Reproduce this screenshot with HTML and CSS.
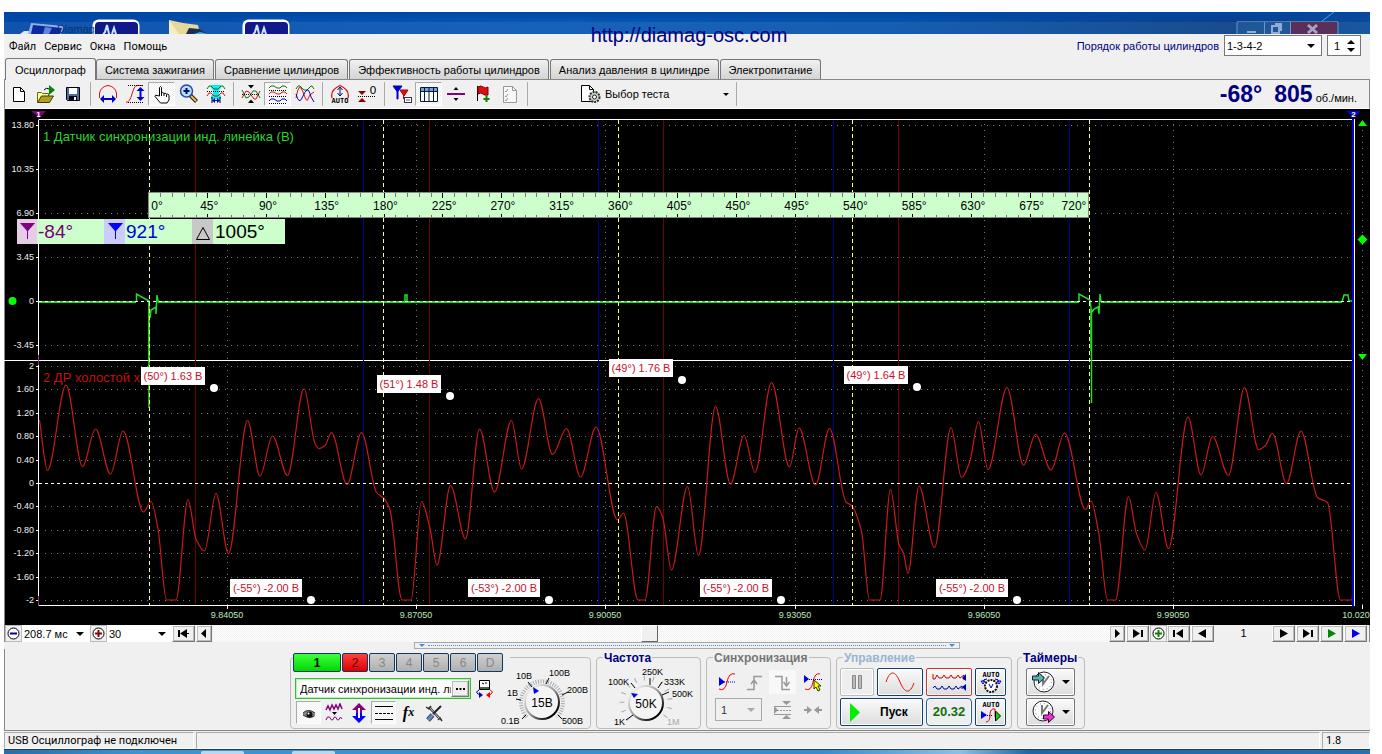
FILE: index.html
```html
<!DOCTYPE html>
<html lang="ru">
<head>
<meta charset="utf-8">
<title>Diamag2</title>
<link rel="stylesheet" href="styles.css">
</head>
<body>
<div class="app">
  <div class="desktop" aria-hidden="true">
    <svg width="300" height="22" viewBox="4 12 300 22">
      <path d="M20 34l4-3h7l2 3z" fill="#dfe8f5"/>
      <path d="M31 23l33 3-3 8H28z" fill="#8fb0e8"/><path d="M33 25l29 3-2 6H31z" fill="#0d2a9c"/><path d="M45 27l7 1-3 6h-6z" fill="#5d86d8"/>
      <rect x="92.500" y="19.500" width="47" height="24" rx="6" fill="#fff"/><rect x="95" y="22" width="43" height="22" rx="4" fill="#10188a"/><path d="M102 36l3-4 2-7 2 9M112 34l2-6 2 6" fill="none" stroke="#cfe0ff" stroke-width="2"/>
      <path d="M169 20l14 3 15 2 2 9h-31z" fill="#e8d898"/><path d="M169 20l10 14h-10z" fill="#f6ecc0"/><path d="M186 34l3-6 10 1 9 5z" fill="#1b2f52"/><path d="M194 34l6-2 8 2z" fill="#41b0e0"/>
      <rect x="242.500" y="19.500" width="47" height="24" rx="6" fill="#fff"/><rect x="245" y="22" width="43" height="22" rx="4" fill="#10188a"/><path d="M252 36l3-4 2-7 2 9M262 34l2-6 2 6" fill="none" stroke="#cfe0ff" stroke-width="2"/>
      <text x="57" y="33" class="ghost-title">Diamag2</text>
    </svg>
    <svg width="140" height="22" viewBox="1230 12 140 22">
      <path d="M1318 24l16-12" stroke="#5f9bd8"/>
      <path d="M1238 22h53v12h-53z" fill="#205796"/><path d="M1291 22h46v12h-46z" fill="#5a2f5a"/>
      <path d="M1237 22v12M1338 22v12M1264.500 22v12M1290.500 22v12" stroke="#6f95c4"/><path d="M1237 21.500h101" stroke="#4f7ab4"/>
      <path d="M1247 31h9v2h-9z" fill="#8fadd2"/><path d="M1272 26h7v7h-7zM1275 24h6v7" fill="none" stroke="#8fadd2" stroke-width="2"/><path d="M1308 25l9 8m0-8l-9 8" stroke="#a8a4c4" stroke-width="3"/>
    </svg>
  </div>

  <header class="menubar">
    <nav class="menu"><a href="#">Файл</a><a href="#">Сервис</a><a href="#">Окна</a><a href="#">Помощь</a></nav>
    <a class="site" href="#">http://diamag-osc.com</a>
    <div class="order">
      <label for="order">Порядок работы цилиндров</label>
      <span class="combo order-combo"><select id="order"><option>1-3-4-2</option></select></span>
      <span class="spin"><input id="cyl" value="1" aria-label="Цилиндр"><svg width="8" height="12" viewBox="0 0 8 12"><path d="M0 4l4-4 4 4zM0 8h8l-4 4z"/></svg></span>
    </div>
  </header>

  <nav class="tabs">
    <button class="tab active">Осциллограф</button><button class="tab">Система зажигания</button><button class="tab">Сравнение цилиндров</button><button class="tab">Эффективность работы цилиндров</button><button class="tab">Анализ давления в цилиндре</button><button class="tab">Электропитание</button>
  </nav>

  <div class="toolbar">
    <div class="tools">
      <button class="tool" aria-label="Новый"><svg viewBox="0 0 20 20"><path d="M4.500 3.500h7l4 4v10h-11z" fill="#fff" stroke="#000"/><path d="M11.500 3.500v4h4" fill="none" stroke="#000"/></svg></button>
      <button class="tool" aria-label="Открыть"><svg viewBox="0 0 20 20"><path d="M1.500 18V8.500h4l1 1h6V12" fill="#ffff9c" stroke="#6b6b00"/><path d="M1.500 18.500l4-6.500h12l-4 6.500z" fill="#b0a020" stroke="#3b3b00"/><path d="M13 1l6 5-6 5z" fill="#080"/><path d="M8 6q2-3 5-1" fill="none" stroke="#000"/></svg></button>
      <button class="tool" aria-label="Сохранить"><svg viewBox="0 0 20 20"><path d="M3.500 3.500h13v13h-12l-1-1z" fill="#536b9c" stroke="#001"/><path d="M6 4h8v6H6z" fill="#fff"/><path d="M6 12h8v4H6z" fill="#001"/><path d="M11 13h2v3h-2z" fill="#fff"/></svg></button>
    </div>
    <div class="tools">
      <button class="tool" aria-label="Ширина"><svg viewBox="0 0 20 20"><path d="M1.500 14V9Q3 2.500 10 1.500 17 2.500 18.500 9v5" fill="none" stroke="#e01010"/><path d="M2 15l4-4v3h8v-3l4 4-4 4v-3H6v3z" fill="#0000c8"/></svg></button>
      <button class="tool" aria-label="Высота"><svg viewBox="0 0 20 20"><path d="M1 18.500Q5 18 7 10T12 1.500h5" fill="none" stroke="#e01010"/><path d="M3 1.500h15M3 18.500h15" stroke="#000" stroke-dasharray="1 1"/><path d="M15.500 3l4 4h-3v6h3l-4 4-4-4h3V7h-3z" fill="#0000c8"/></svg></button>
      <button class="tool pressed" aria-label="Рука"><svg viewBox="0 0 20 20"><path d="M7.500 12V3.500q1-2 2 0V9q1-1.500 2.500.5 1-1 2.500.7 1.500-.7 2.500 1V16l-2 3H8.500L3 12.500q0-2 2-1z" fill="#fff" stroke="#000"/><path d="M9.500 9v3M12 9.500V12M14.500 10.500V13" stroke="#000"/></svg></button>
      <button class="tool" aria-label="Лупа"><svg viewBox="0 0 20 20"><path d="M11 11l6.500 6.500" stroke="#222" stroke-width="4"/><path d="M12 12l5 5" stroke="#f0c040" stroke-width="2"/><circle cx="7.500" cy="7" r="6" fill="#b4e4ff" stroke="#2848a8" stroke-width="1.500"/><path d="M7.500 4v6M4.500 7h6" stroke="#000078" stroke-width="2"/></svg></button>
      <button class="tool" aria-label="Окно фильтра"><svg viewBox="0 0 20 20"><path d="M5 1h10v3l-2 2v4l2 2v3H5v-3l2-2V6L5 4z" fill="#00f0f8"/><path d="M1 5l2-3h2l3 3h4l3-3h2l2 3" fill="none" stroke="#087808"/><path d="M1 7.500h18" stroke="#000" stroke-dasharray="1 1"/><path d="M1 12l2-3h2l3 3h4l3-3h2l2 3" fill="none" stroke="#e01010"/><path d="M6 13v6M14 13v6" stroke="#000"/><path d="M6 16.500l3-2.500v2h2v-2l3 2.500-3 2.500v-2H9v2z" fill="#0000c8"/></svg></button>
    </div>
    <div class="tools">
      <button class="tool" aria-label="Совместить"><svg viewBox="0 0 20 20"><path d="M1 14l4-7 3 1 5 7h2l4-8" fill="none" stroke="#e01010"/><path d="M1 6l4 8 3-1 4-6h3l4 7" fill="none" stroke="#087808"/><path d="M1 10.500h18" stroke="#000" stroke-dasharray="1 1"/><path d="M7 1h6l-3 3.500zM7 19h6l-3-3.500z"/></svg></button>
      <button class="tool pressed" aria-label="Разделить"><svg viewBox="0 0 20 20"><path d="M1 4l2-2h3l3 2h3l2-2h3l2 2" fill="none" stroke="#087808"/><path d="M1 6.500h18M1 12.500h18M1 19.500h18" stroke="#000" stroke-dasharray="1 1"/><path d="M1 10l2-2h3l3 2h3l2-2h3l2 2" fill="none" stroke="#e01010"/><path d="M1 17l2-2h3l3 2h3l2-2h3l2 2" fill="none" stroke="#0000c8"/></svg></button>
      <button class="tool" aria-label="Наложить"><svg viewBox="0 0 20 20"><path d="M1 5l2-3h2l4 4h3l4-4h1l2 3" fill="none" stroke="#087808"/><path d="M1 14Q4-4 8 8t5 7 6-7" fill="none" stroke="#e01010"/><path d="M1 10q3 11 6 4t5-8 4 7l3 5" fill="none" stroke="#0000c8"/></svg></button>
    </div>
    <div class="tools">
      <button class="tool" aria-label="Авто"><svg viewBox="0 0 20 20"><path d="M2 14Q0 6 10 1.500 20 6 18 14" fill="none" stroke="#e01010" stroke-width="1.300"/><path d="M10 3v9M7.500 6L10 3l2.500 3M7.500 9l2.500 3 2.500-3" fill="none" stroke="#001080"/><text x="10" y="19" class="i-auto">AUTO</text></svg></button>
      <button class="tool" aria-label="Ноль"><svg viewBox="0 0 20 20"><path d="M1 7h8l-4 4zM1 18h8l-4-4z" fill="#800"/><path d="M1 12.500h18" stroke="#000" stroke-dasharray="1 1"/><text x="16" y="10" class="i-zero">0</text></svg></button>
    </div>
    <div class="tools">
      <button class="tool" aria-label="Маркеры"><svg viewBox="0 0 20 20"><path d="M1 2h9L5.500 8zM5 7h1v8H5z" fill="#0000c8" stroke="#0000c8"/><path d="M8 6h8l-4 6zM11.500 11v4" fill="#e01010" stroke="#a00"/><rect x="12.500" y="13.500" width="7" height="5" fill="#fff" stroke="#334"/><path d="M14 16h4" stroke="#557"/></svg></button>
      <button class="tool pressed" aria-label="Таблица"><svg viewBox="0 0 20 20"><path d="M1.500 3.500h17v14h-17z" fill="#fff" stroke="#001a40"/><path d="M2 4h16v3H2z" fill="#78a0d8"/><path d="M1 7.500h18M5.500 3v15M10 3v15M14.500 3v15" stroke="#001a40"/></svg></button>
      <button class="tool" aria-label="Разделитель"><svg viewBox="0 0 20 20"><path d="M1 9h18v2H1z" fill="#800080"/><path d="M7.500 6L10 3l2.500 3zM7.500 14l2.500 3 2.500-3z"/></svg></button>
      <button class="tool" aria-label="Флажок"><svg viewBox="0 0 20 20"><path d="M4.500 2v15" stroke="#000"/><path d="M5 3q3-2 5 0t5 0v8q-3 1-5-1t-5 0z" fill="#e01010" stroke="#700"/><path d="M13.500 12v6M10.500 15h6" stroke="#080" stroke-width="2"/></svg></button>
      <button class="tool" aria-label="Список"><svg viewBox="0 0 20 20"><path d="M3.500 2.500h9l4 4v12h-13z" fill="#f8f8f8" stroke="#999"/><path d="M12.500 2.500v4h4M5 7l1 1 2-3M5 12l1 1 2-3M5 16l1 1 2-3" fill="none" stroke="#999"/></svg></button>
    </div>
    <button class="test"><svg width="22" height="20" viewBox="0 0 22 20"><path d="M1.500 1.500h8l4 4v12h-12z" fill="#fff" stroke="#000"/><path d="M9.500 1.500v4h4" fill="none" stroke="#000"/><circle cx="14.500" cy="13" r="5" fill="#c8d8c8" stroke="#333" stroke-width="2" stroke-dasharray="2 1"/><circle cx="14.500" cy="13" r="2" fill="#fff" stroke="#222"/></svg><span>Выбор теста</span><i class="caret"></i></button>
    <div class="rpm"><b>-68°</b><b>805</b><span>об./мин.</span></div>
  </div>

  <svg class="plot" id="plot" viewBox="4 109 1366 516">
    <rect x="4" y="109" width="1366" height="516"/>
    <path d="M4.500 109v516" stroke="#888"/>
    <g id="grid"></g>
    <path d="M38.500 119v487M38 119.500h1316M4 360.500h1350M38 605.500h1316" stroke="#fff"/>
    <path d="M195.500 120v485M429.500 120v485M663.500 120v485M898.500 120v485" class="mark-red"/>
    <path d="M363.500 120v485M598.500 120v485M833.500 120v485M1069.500 120v485" class="mark-blue"/>
    <text x="43" y="141" class="trace-name green">1 Датчик синхронизации инд. линейка (В)</text>
    <text x="43" y="382" class="trace-name red">2 ДР холостой ход</text>
    <path class="trace-green" d="M136.500 302v-8l12.500 7v59M150 318l1-8 5-3v7l1-19 1 6 3 1M405 302v-7h2v7M1079 302v-8l11 6 1 8v43M1092 312l2-3 4-2 1 7 1-20 1 8M1342 302l2-7h4l1 6h5"/>
    <path class="trace-green flat" d="M39 302h97M158 302h921M1101 302h241"/>
    <path class="trace-green" d="M149 301v107M1091.500 309v94"/>
    <path d="M39 301.500h1314M39 483.500h1314" stroke="#fff" stroke-dasharray="3 3"/>
    <path id="trace-red" class="trace-red"/>
    <path d="M149.500 120v485M383.500 120v485M618.500 120v485M852.500 120v485M1089.500 120v485" class="cursor"/>
    <path d="M38.500 117v3M38.500 355v10M38.500 596v10" stroke="#806" opacity=".8"/>
    <path d="M1353 119v487" stroke="#0000e0" stroke-width="2"/><path d="M1354.500 119v487" stroke="#fff"/>
    <path d="M31 111h15l-7 7z" fill="#800080"/><path d="M1346 111h15l-7 7z" fill="#0000d8"/>
    <text x="38.500" y="117" class="flag">1</text><text x="1353.500" y="117" class="flag">2</text>
    <path d="M1358 126h9l-4.500-6zM1358 354h9l-4.500 6zM1357.500 239.500l5-5 5 5-5 5z" fill="#0f0"/>
    <circle cx="12.500" cy="301" r="4" fill="#0f0"/>
    <g id="ruler"></g>
    <g>
      <rect x="17" y="219" width="268" height="25" fill="#cfc"/>
      <rect x="17" y="219" width="20" height="25" fill="#e6cce6"/><rect x="104" y="219" width="21" height="25" fill="#ccf"/><rect x="192" y="219" width="21" height="25" fill="#c8c8c8"/>
      <path d="M20 223h15l-7 8v8h-1v-8z" fill="#800080"/><path d="M108 223h15l-7 8v8h-1v-8z" fill="#00f"/><path d="M196.500 239.500h13l-6.500-12z" fill="none" stroke="#000"/>
      <text x="38" y="238" class="measure" fill="#707">-84°</text><text x="126" y="238" class="measure" fill="#00d">921°</text><text x="215" y="238" class="measure">1005°</text>
    </g>
    <g id="callouts"></g>
  </svg>

  <div class="navrow">
    <button class="mini" aria-label="Уменьшить"><svg width="15" height="15" viewBox="0 0 15 15"><circle cx="7.500" cy="7.500" r="5.500" fill="#fff" stroke="#000"/><path d="M4 7.500h7" stroke="#008" stroke-width="2"/></svg></button>
    <span class="combo span-combo"><select aria-label="Развёртка"><option>208.7 мс</option></select></span>
    <button class="mini" aria-label="Увеличить"><svg width="15" height="15" viewBox="0 0 15 15"><circle cx="7.500" cy="7.500" r="5.500" fill="#fff" stroke="#000"/><path d="M4 7.500h7M7.500 4v7" stroke="#800" stroke-width="2"/></svg></button>
    <span class="combo count-combo"><select aria-label="Масштаб"><option>30</option></select></span>
    <button class="nb w23" aria-label="В начало"><svg width="13" height="9" viewBox="0 0 13 9"><path d="M1 1h2v7H1zM10 0v9L3 4.500z"/><path d="M10 4h2v1h-2z"/></svg></button>
    <button class="nb w17" aria-label="Назад"><svg width="6" height="9" viewBox="0 0 6 9"><path d="M5 0v9L0 4.500z"/></svg></button>
    <div class="track"><button class="thumb" aria-label="Позиция"></button></div>
    <button class="nb w17" aria-label="Вперёд"><svg width="6" height="9" viewBox="0 0 6 9"><path d="M1 0v9l5-4.500z"/></svg></button>
    <button class="nb w23" aria-label="В конец"><svg width="13" height="9" viewBox="0 0 13 9"><path d="M10 1h2v7h-2zM2 0v9l7-4.500z"/></svg></button>
    <button class="mini" aria-label="Добавить"><svg width="15" height="15" viewBox="0 0 15 15"><circle cx="7.500" cy="7.500" r="5.500" fill="#fff" stroke="#000"/><path d="M4 7.500h7M7.500 4v7" stroke="#080" stroke-width="2"/></svg></button>
    <button class="nb w23" aria-label="Первый кадр"><svg width="13" height="9" viewBox="0 0 13 9"><path d="M1 1h2v7H1zM11 0v9L4 4.500z"/></svg></button>
    <button class="nb w23" aria-label="Предыдущий кадр"><svg width="9" height="9" viewBox="0 0 9 9"><path d="M8 0v9L0 4.500z"/></svg></button>
    <output class="frame">1</output>
    <button class="nb w23" aria-label="Следующий кадр"><svg width="9" height="9" viewBox="0 0 9 9"><path d="M1 0v9l8-4.500z"/></svg></button>
    <button class="nb w23" aria-label="Последний кадр"><svg width="13" height="9" viewBox="0 0 13 9"><path d="M10 1h2v7h-2zM2 0v9l7-4.500z"/></svg></button>
    <button class="nb w23" aria-label="Воспроизвести"><svg width="9" height="9" viewBox="0 0 9 9"><path d="M1 0v9l8-4.500z" fill="#080"/></svg></button>
    <button class="nb w23" aria-label="Воспроизвести всё"><svg width="9" height="9" viewBox="0 0 9 9"><path d="M1 0v9l8-4.500z" fill="#00e"/></svg></button>
  </div>

  <div class="splitter"><i class="caret blue"></i><i class="dots"></i><i class="caret blue"></i></div>

  <main class="panel">
    <section class="group channel">
      <div class="channel-main">
        <div class="chans"><button class="ch on1">1</button><button class="ch on2">2</button><button class="ch">3</button><button class="ch">4</button><button class="ch">5</button><button class="ch">6</button><button class="ch">D</button></div>
        <div class="sensor-row">
          <div class="sensor"><input aria-label="Датчик" value="Датчик синхронизации инд. линейка"><button class="nb dots3" aria-label="Выбрать датчик"><svg width="9" height="2" viewBox="0 0 9 2"><path d="M0 0h2v2H0zM3.500 0h2v2h-2zM7 0h2v2H7z"/></svg></button></div>
          <button class="tool" aria-label="Инверсия"><svg viewBox="0 0 20 20"><path d="M4.500 1.500h10v9h-10z" fill="#fff" stroke="#000"/><path d="M5 8h9v2H5z" fill="#486048"/><path d="M7 4l2 1M11 3v2" stroke="#000"/><path d="M4 11q-4 2-1 4l3 1" fill="none" stroke="#00a"/><path d="M4 13l4 3-4 3z" fill="#00a"/><path d="M15 11q4 2 1 4l-2 1" fill="none" stroke="#e00"/><path d="M15 13l-4 3 4 3z" fill="#e00"/></svg></button>
        </div>
        <div class="chan-tools">
          <button class="tool pressed" aria-label="Показать"><svg viewBox="0 0 20 20"><path d="M4 10q5-6 12 0v3q-6 5-12-1z" fill="#8a8a84"/><path d="M4 10q5-5 12 0M4 12q6 4 11 1" fill="none" stroke="#333"/><circle cx="10.500" cy="11.500" r="3" fill="#111"/><circle cx="9.500" cy="10.500" r="1" fill="#fff"/></svg></button>
          <button class="tool" aria-label="Сглаживание"><svg viewBox="0 0 20 20"><path d="M2 7l2-4 2 4 2-5 2 4 2-4 2 4 2-5 2 5" fill="none" stroke="#800080" stroke-width="1.500"/><path d="M8 9h5l-2.500 3z"/><path d="M2 17l1.500-3h2l2 3h1l2-3h1l2 3h1l2-3 1.500 2" fill="none" stroke="#800080"/></svg></button>
          <button class="tool" aria-label="Сдвиг"><svg viewBox="0 0 20 20"><path d="M10 0l7 7h-4v3H7V7H3z" fill="#800080"/><path d="M10 20l7-7h-4v-3H7v3H3z" fill="#00f"/><path d="M9 5h2v10H9zM5 9.500h2v1H5zM13 9.500h2v1h-2z" fill="#fff"/></svg></button>
          <button class="tool pressed" aria-label="Линии"><svg viewBox="0 0 20 20"><path d="M1 3.500h18M1 16.500h18" stroke="#000"/><path d="M1 10.500h18" stroke="#000" stroke-dasharray="3 1"/></svg></button>
          <button class="tool fx" aria-label="Функция"><i>f</i>x</button>
          <button class="tool" aria-label="Настройки"><svg viewBox="0 0 20 20"><path d="M5 4l10 11" stroke="#333" stroke-width="2.500"/><path d="M6 5l9 10" stroke="#ccc"/><path d="M2 4l3 2 2-3" fill="none" stroke="#333" stroke-width="1.500"/><path d="M14 17l2-2 2 3" fill="none" stroke="#333" stroke-width="1.500"/><path d="M17 3l-8 8" stroke="#222" stroke-width="2"/><path d="M8.500 12L4 17" stroke="#304870" stroke-width="5"/><path d="M8.500 12L4 17" stroke="#6888b8" stroke-width="3"/></svg></button>
        </div>
      </div>
      <svg class="knob" width="92" height="66" viewBox="498 662 92 66">
        <defs><linearGradient id="kg" x1="0" y1="0" x2="1" y2="1"><stop offset=".15" stop-color="#e8e8e8"/><stop offset=".5" stop-color="#999"/><stop offset=".85" stop-color="#000"/></linearGradient></defs>
        <path d="M527 717A21 21 0 1 1 557 717" fill="none" stroke="#aaa" stroke-width="4" stroke-dasharray="1 1.500"/>
        <circle cx="542" cy="702" r="17" fill="#f4f4f4" stroke="url(#kg)" stroke-width="2"/>
        <path d="M522 719l4-4M516 699l5 1M528 682l4 5M549 678l-3 6M568 692l-6 3M562 719l-4-4" stroke="#000"/>
        <path d="M533 687l6 4-5 3z" fill="#00f"/>
        <text x="542" y="707" class="knob-value">15В</text>
        <g class="knob-label"><text x="501" y="724">0.1В</text><text x="507" y="696">1В</text><text x="516" y="679">10В</text><text x="549" y="676">100В</text><text x="567" y="693">200В</text><text x="562" y="724">500В</text></g>
      </svg>
    </section>

    <section class="group freq"><h2>Частота</h2>
      <svg class="knob" width="103" height="64" viewBox="596 664 103 64">
        <path d="M628 718A24 24 0 1 1 662 718" fill="none" stroke="#aaa" stroke-width="5" stroke-dasharray="1 8"/>
        <circle cx="645" cy="702" r="17" fill="#f4f4f4" stroke="url(#kg)" stroke-width="2"/>
        <path d="M625 719l7-5M630 682l4 5M649 677v7M661 681l-4 6M668 691l-7 3" stroke="#000"/>
        <path d="M630 692l7 1-4 4z" fill="#00f"/>
        <text x="645" y="707" class="knob-value">50K</text>
        <g class="knob-label"><text x="613" y="724">1K</text><text x="607" y="684">100K</text><text x="641" y="674">250K</text><text x="663" y="684">333K</text><text x="671" y="696">500K</text><text x="666" y="724" fill="#aaa">1M</text></g>
      </svg>
    </section>

    <section class="group sync"><h2>Синхронизация</h2>
      <div class="sync-grid">
        <button class="tool" aria-label="Синхронизация по фронту"><svg viewBox="0 0 20 20"><path d="M2 17q6 3 8-7t8-8" fill="none" stroke="#e00"/><path d="M2 5l6 5-6 4z" fill="#00e"/><path d="M3 10h15" stroke="#00a" stroke-dasharray="1 1"/></svg></button>
        <button class="tool" aria-label="Фронт"><svg viewBox="0 0 20 20"><path d="M2 17.500h7v-13h8M9 8l-3 4M9 8l3 4" fill="none" stroke="#999" stroke-width="1.500"/></svg></button>
        <button class="tool soft" aria-label="Спад"><svg viewBox="0 0 20 20"><path d="M2 4.500h7v13h8M13.500 5v8m-3-3l3 4 3-4" fill="none" stroke="#999" stroke-width="1.500"/></svg></button>
        <button class="tool" aria-label="Выбор уровня"><svg viewBox="0 0 20 20"><path d="M2 17q6 3 8-7t7-8" fill="none" stroke="#e00"/><path d="M1 3l5 4-5 4z" fill="#00e"/><path d="M2 7.500h17" stroke="#00a" stroke-dasharray="1 1"/><path d="M11 8l7 6h-3l2 4-2 1-2-4-2 2z" fill="#ff0" stroke="#330"/></svg></button>
        <span class="combo sync-combo"><select aria-label="Канал синхронизации" disabled><option>1</option></select></span>
        <button class="tool" aria-label="Расширить"><svg viewBox="0 0 20 20"><path d="M9 1h9l-4.500 4zM9 19h9l-4.500-4zM1 6l4 4-4 4z" fill="#999"/><path d="M1 6.500h17M1 14.500h17" stroke="#999"/><path d="M1 10.500h17" stroke="#999" stroke-dasharray="2 1"/></svg></button>
        <button class="tool" aria-label="Сжать"><svg viewBox="0 0 20 20"><path d="M1 9h3V6l5 4-5 4v-3H1zM19 9h-3V6l-5 4 5 4v-3h3z" fill="#999"/></svg></button>
      </div>
    </section>

    <section class="group ctrl"><h2>Управление</h2>
      <div class="ctrl-grid">
        <button class="btn off" aria-label="Пауза"><svg width="12" height="16" viewBox="0 0 12 16"><path d="M1.500 1.500h3v13h-3zM7.500 1.500h3v13h-3z" fill="#bbb" stroke="#888"/></svg></button>
        <button class="btn" aria-label="Непрерывно"><svg width="30" height="20" viewBox="0 0 30 20"><path d="M1 10C5-2 10-2 15 10s10 12 14 1" fill="none" stroke="#e01010"/></svg></button>
        <button class="btn red" aria-label="Самописец"><svg width="36" height="20" viewBox="0 0 36 20"><path d="M2 2v5h2l2-4 2 3h3l2-3 2 3h3l2-3 2 3h3l2-3 2 3 4-3v5" fill="none" stroke="#c00"/><path d="M2 16l2-2 2 3h3l2-3 2 3h3l2-3 2 3h3l2-3 2 3 4-3v3" fill="none" stroke="#00a"/><path d="M35 2v7l-4-3zM35 12v7l-4-4z" fill="#00a"/></svg></button>
        <button class="btn" aria-label="Авто масштаб"><svg width="22" height="24" viewBox="0 0 22 24"><text x="11" y="7" class="i-auto">AUTO</text><path d="M3 12q0-3 4-3M19 12q0-3-4-3M1 11l2 3 2-3zM17 11l2 3 2-3z" fill="none" stroke="#00c"/><circle cx="11" cy="16" r="6" fill="#fff" stroke="#111" stroke-width="2" stroke-dasharray="2 1"/><path d="M9 14l2 4 2-4" fill="none" stroke="#00a"/></svg></button>
        <button class="btn start"><svg width="10" height="19" viewBox="0 0 10 19"><path d="M0 0l10 9.500L0 19z" fill="#0e0"/></svg><span>Пуск</span></button>
        <button class="btn time">20.32</button>
        <button class="btn" aria-label="Авто синхронизация"><svg width="22" height="24" viewBox="0 0 22 24"><text x="11" y="7" class="i-auto">AUTO</text><path d="M1 11l6 4-6 4z" fill="#00e"/><path d="M6 22q4 0 4-7t5-6v8" fill="none" stroke="#e00"/><path d="M1 15.500h12" stroke="#00a" stroke-dasharray="1 1"/><path d="M15.500 11l5 5-5 5z" fill="#0d0" stroke="#000"/></svg></button>
      </div>
    </section>

    <section class="group timers"><h2>Таймеры</h2>
      <div class="timer-col">
        <button class="btn gray" aria-label="Таймер пуска"><svg width="25" height="24" viewBox="0 0 25 24"><circle cx="13" cy="12" r="10" fill="#fff" stroke="#222"/><circle cx="13" cy="12" r="7.500" fill="none" stroke="#777" stroke-dasharray="1 3"/><path d="M12 6v8l6-8" fill="none" stroke="#777" stroke-width="2"/><path d="M1.500 6h6V2.500l6 5.500-6 5.500V10h-6z" fill="#5cb4a8" stroke="#123"/></svg><i class="caret"></i></button>
        <button class="btn gray" aria-label="Таймер остановки"><svg width="25" height="24" viewBox="0 0 25 24"><circle cx="12" cy="11" r="10" fill="#fff" stroke="#222"/><circle cx="12" cy="11" r="7.500" fill="none" stroke="#777" stroke-dasharray="1 3"/><path d="M11 5v8l6-8" fill="none" stroke="#777" stroke-width="2"/><path d="M12.500 15h5v-3.500l6 5.500-6 5.500V19h-5z" fill="#f030d0" stroke="#303"/></svg><i class="caret"></i></button>
      </div>
    </section>
  </main>

  <footer class="status"><span class="cell msg">USB Осциллограф не подключен</span><span class="cell grow"></span><span class="cell ver">1.8</span></footer>
  <div class="taskbar" aria-hidden="true"><i></i><i></i></div>
</div>
<script src="chart.js"></script>
</body>
</html>
```
FILE: styles.css
```css
* { box-sizing: border-box; }
body { margin: 0; background: #fff; font: 11px/14px "Liberation Sans", sans-serif; color: #000; }
button, input, select { font: inherit; color: inherit; margin: 0; padding: 0; border: 0; background: none; border-radius: 0; }
a { color: inherit; text-decoration: none; }
svg { display: block; flex: none; }
.app { margin: 12px 12px 0 4px; background: #f0f0f0; }

.desktop { display: flex; justify-content: space-between; height: 22px; background: linear-gradient(#0046a4, transparent 45%, #ffffff10 46%), linear-gradient(90deg, #0048a8, #0858b4 40%, #0653ac 65%, #0a4088 90%, #0a4c98); }
.ghost-title { font: 11px "Liberation Sans", sans-serif; fill: #0a2a60; opacity: .8; }

.menubar { position: relative; display: flex; justify-content: space-between; height: 24px; }
.menu { display: flex; align-items: center; gap: 8px; padding: 2px 0 0 5px; font: 11px/14px Roboto, sans-serif; }
.site { position: absolute; left: 50%; top: -11px; transform: translateX(-50%); margin-left: 2px; font-size: 20px; line-height: 24px; color: #000080; }
.order { display: flex; align-items: flex-start; gap: 5px; padding: 1px 9px 0 0; }
.order label { color: #000080; line-height: 22px; }
.combo { position: relative; display: block; background: #fff; }
.combo select { display: block; width: 100%; height: 100%; appearance: none; padding-left: 2px; opacity: 1; }
.combo::after { content: ""; position: absolute; right: 6px; top: 50%; margin-top: -2px; border: 4px solid transparent; border-top-color: #000; border-bottom: 0; pointer-events: none; }
.order-combo { width: 98px; height: 21px; border: 1px solid #777; }
.spin { display: flex; align-items: center; width: 34px; height: 21px; border: 1px solid #777; background: #fff; }
.spin input { width: 19px; padding-left: 6px; }

.tabs { display: flex; align-items: flex-end; gap: 1px; height: 22px; padding-left: 1px; border-bottom: 1px solid #888; }
.tab { height: 20px; padding: 0 8px; border: 1px solid #777; border-bottom: 0; border-radius: 3px 3px 0 0; background: linear-gradient(#f0f0f0, #d4d4d4); white-space: nowrap; }
.tab.active { height: 22px; padding: 0 9px; margin: 0 -1px -1px 0; background: #f0f0f0; position: relative; }

.toolbar { display: flex; align-items: center; height: 29px; border-bottom: 1px solid #fff; border-left: 1px solid #888; border-right: 1px solid #888; }
.tools { display: flex; padding: 0 4px 0 3px; border-right: 1px solid #aaa; }
.tools:first-child { padding-left: 0; }
.tool { display: grid; place-items: center; width: 27px; height: 24px; }
.tool svg { width: 20px; height: 20px; }
.pressed { background: repeating-conic-gradient(#fff 0 25%, #f0f0f0 0 50%) 0 0 / 2px 2px; border: 1px solid #fff; border-left-color: #aaa; border-top-color: #aaa; }
.soft { background: #f8f8f8; }
.i-auto { font: bold 7px "DejaVu Sans Mono", monospace; text-anchor: middle; }
.i-zero { font: 11px "DejaVu Sans", sans-serif; text-anchor: middle; }
.test { display: flex; align-items: center; width: 157px; height: 24px; margin-left: 52px; padding-right: 7px; border-right: 1px solid #aaa; gap: 3px; }
.caret { border: 4px solid transparent; border-top-color: #000; border-bottom: 0; }
.test .caret { margin-left: auto; border-width: 3px; border-bottom: 0; }
.rpm { display: flex; align-items: baseline; margin-left: auto; padding-right: 12px; }
.rpm b { margin-right: 3px; font-size: 23px; line-height: 24px; color: #000080; }
.rpm b:first-child { margin-right: 12px; }

.plot { width: 100%; height: auto; font-family: "Liberation Sans", sans-serif; }
.grid-line { stroke: #777; stroke-dasharray: 1 5; }
.tick { stroke: #fff; }
.axis { font-size: 9px; fill: #eee; text-anchor: end; }
.time-label { font-size: 9px; fill: #bfe8bf; text-anchor: middle; }
.mark-red { stroke: #700000; }
.mark-blue { stroke: #000088; }
.cursor { stroke: #ffff70; stroke-dasharray: 4 3; }
.trace-name { font-size: 13px; }
.green { fill: #2bd52b; }
.red { fill: #c01010; }
.trace-green { fill: none; stroke: #20e020; stroke-width: 1.5; }
.flat { stroke-width: 2; }
.trace-red { fill: none; stroke: #c81a1a; stroke-width: 1.2; }
.flag { font-size: 8px; font-weight: bold; fill: #fff; text-anchor: middle; }
.measure { font-size: 19px; }
.ruler-label { font-size: 12px; text-anchor: middle; }
.callout { font-size: 11px; fill: #c8102a; text-anchor: middle; }

.navrow { display: flex; height: 17px; align-items: stretch; border-left: 1px solid #888; border-right: 1px solid #888; padding-right: 1px; }
.mini { width: 17px; display: grid; place-items: center; border: 1px solid #bbb; }
.nb { display: grid; place-items: center; margin-right: 1px; background: #f0f0f0; border: 1px solid; border-color: #fff #777 #777 #fff; box-shadow: 0 0 0 1px #bbb inset; }
.w17 { width: 16px; }
.w23 { width: 23px; }
.span-combo { width: 68px; }
.count-combo { width: 65px; }
.track { flex: 1; background: repeating-conic-gradient(#fff 0 25%, #f0f0f0 0 50%) 0 0 / 2px 2px; display: flex; padding-left: 31.4%; }
.thumb { width: 17px; background: #f0f0f0; border: 1px solid; border-color: #fff #666 #666 #fff; }
.frame { width: 57px; text-align: center; line-height: 17px; }

.splitter { display: flex; align-items: center; gap: 3px; width: 40%; height: 7px; margin: 0 auto; border: 1px solid #aaa; padding: 0 4px; }
.caret.blue { border-width: 3px; border-bottom: 0; border-top-color: #3a90e0; }
.dots { flex: 1; border-top: 1px dotted #4a90d8; }

.panel { display: flex; justify-content: center; gap: 5px; padding: 8px 0 1px; border-left: 1px solid #888; border-bottom: 1px solid #888; }
.group { height: 72px; border: 1px solid #bbb; border-radius: 4px; }
.group h2 { width: fit-content; height: 14px; margin: -7px 0 0 6px; padding: 0 1px; background: #f0f0f0; font-size: 12px; line-height: 14px; color: #000080; }
.channel { display: flex; width: 301px; }
.channel-main { flex: 1; min-width: 0; margin-top: -5px; padding-left: 2px; }
.chans { display: flex; width: max-content; background: #f0f0f0; gap: 1px; padding-right: 7px; font-size: 12px; }
.ch { width: 26px; height: 19px; border: 1px solid #103860; border-radius: 2px; background: linear-gradient(#d0d0d0, #b0b0b0); color: #888; }
.on1 { width: 48px; background: linear-gradient(#40ff40, #00d800); color: #000; font-weight: bold; }
.on2 { background: linear-gradient(#ff4040, #e00000); color: #500; }
.sensor-row { display: flex; align-items: center; padding: 6px 0 0 2px; gap: 2px; }
.sensor { display: flex; width: 176px; height: 21px; border: 1px solid #30c030; outline: 1px solid #b8f0b8; outline-offset: -2px; background: #fff; padding: 1px; }
.sensor input { flex: 1; min-width: 0; padding-left: 3px; }
.dots3 { width: 18px; margin: 0; }
.sensor-row .tool { width: 24px; height: 20px; }
.chan-tools { display: flex; padding: 2px 0 0 3px; }
.chan-tools .tool { width: 25px; height: 23px; }
.chan-tools .fx { display: flex; justify-content: center; align-items: center; font: italic bold 12px "Liberation Serif", serif; }
.fx i { font-size: 16px; }
.knob { margin-top: 4px; font-family: "Liberation Sans", sans-serif; }
.freq .knob { margin-top: 0; }
.knob-value { font-size: 12px; text-anchor: middle; }
.knob-label { font-size: 9px; }
.freq { width: 105px; }
.sync { width: 125px; }
.sync h2 { color: #777; }
.sync-grid { display: grid; grid-template-columns: 28px 28px 30px 28px; padding: 5px 0 0 6px; row-gap: 4px; }
.sync-grid .tool { height: 24px; }
.sync-combo { grid-column: span 2; width: 47px; height: 23px; margin-left: 2px; border: 1px solid #aaa; background: #f0f0f0; }
.sync-combo select { opacity: 1; color: #333; padding-left: 5px; }
.sync-combo::after { border-top-color: #aaa; }
.ctrl { width: 176px; }
.ctrl h2 { color: #9ab4d0; }
.ctrl-grid { display: grid; grid-template-columns: 34px 46px 46px 31px; gap: 2px 3px; padding: 3px 0 0 3px; grid-auto-rows: 28px; }
.btn { display: flex; align-items: center; justify-content: center; border: 1px solid #104070; border-radius: 2px; background: linear-gradient(#fafafa, #ddd); box-shadow: 0 0 0 1px #fff inset; }
.off { border-color: #bbb; background: #eee; }
.red.btn { border-color: #d03030; }
.start { grid-column: span 2; justify-content: flex-start; font-weight: bold; font-size: 12px; padding-left: 9px; gap: 20px; }
.time { color: #107010; font-weight: bold; font-size: 13px; background: #eee; border-color: #2060a0; border-radius: 4px; }
.timers { width: 68px; }
.timers h2 { margin-left: 4px; }
.timer-col { display: grid; gap: 2px; padding: 3px 0 0 8px; grid-auto-rows: 28px; }
.gray { width: 49px; gap: 6px; border-color: #777; }

.status { display: flex; gap: 2px; height: 18px; padding-top: 1px; font: 11px/15px Roboto, sans-serif; }
.cell { border: 1px solid; border-color: #aaa #fff #fff #aaa; padding-left: 3px; white-space: nowrap; }
.msg { width: 190px; }
.grow { flex: 1; }
.ver { width: 48px; }
.taskbar { height: 5px; background: linear-gradient(#123f6c 1px, transparent 1px), linear-gradient(90deg, #2a6da8, #3f94d0 10%, #3a8ccc 60%, #8cc0e8 70%, #1f66a4 75%, #2a70b0); display: flex; gap: 48px; padding: 2px 0 0 197px; }
.taskbar i { width: 43px; height: 3px; background: #b8d8f0; border-radius: 2px 2px 0 0; }
```
FILE: chart.js
```js
const NS = 'http://www.w3.org/2000/svg';

function add(parent, tag, attrs, text) {
  const el = document.createElementNS(NS, tag);
  for (const key in attrs) el.setAttribute(key, attrs[key]);
  if (text !== undefined) el.textContent = text;
  parent.appendChild(el);
  return el;
}

// Monotone cubic interpolation: extrema stay at the sample points.
function smooth(points) {
  const n = points.length;
  const slope = [];
  for (let i = 0; i < n - 1; i++) {
    slope.push((points[i + 1][1] - points[i][1]) / (points[i + 1][0] - points[i][0]));
  }
  const m = [slope[0]];
  for (let i = 1; i < n - 1; i++) {
    const a = slope[i - 1], b = slope[i];
    m.push(a * b <= 0 ? 0 : 2 * a * b / (a + b));
  }
  m.push(slope[n - 2]);
  let d = `M${points[0]}`;
  for (let i = 0; i < n - 1; i++) {
    const [x0, y0] = points[i], [x1, y1] = points[i + 1];
    const h = (x1 - x0) / 3;
    d += `C${x0 + h},${y0 + m[i] * h} ${x1 - h},${y1 - m[i + 1] * h} ${x1},${y1}`;
  }
  return d;
}

const idle = [
  [39.5,420],[47.5,470.5],[66,385],[82.5,466.5],[95.5,429],[110.5,474],[123,431],[143.5,512],[151,501.5],[158,529],[166.5,600],
  [176,600],[188,499.5],[196,539],[204.5,551],[216,493.5],[228.5,553.5],[247.5,420.5],[260,476],[272.5,436],[287.5,475.5],
  [304,388.5],[315,443.5],[319,448.5],[325,445.5],[331.5,432.5],[347,484.5],[361.5,432.5],[376.5,492.5],[384,498.5],[390,510],[402,600],
  [411,600],[421.5,501.5],[430,528.5],[437,565],[450.5,485.5],[465.5,539],[479.5,429],[494.5,492],[511.5,420.5],[521.5,469],
  [538.5,398.5],[552.5,454.5],[566.5,428.5],[580.5,477],[596,427],[617.5,520],[623.5,513],[638,600],[645,600],[656.5,506.5],
  [662.5,516.5],[671.5,570],[687.5,486.5],[698.5,555.5],[715.5,406.5],[730.5,484],[744,435.5],[755,472.5],[771.5,382.5],
  [789.5,467],[799,428],[815.5,485],[829.5,428.5],[846,502],[851.5,505.5],[861.5,531.5],[869.5,600],[880,600],[890.5,489.5],
  [899,544.5],[903.5,553],[908,573.5],[919,486],[934.5,547.5],[951,427.5],[961.5,477.5],[969.5,462.5],[978.5,421.5],[988,469.5],
  [1007,387.5],[1023.5,465],[1035.5,434.5],[1051,470],[1064.5,433],[1085.5,509.5],[1091,501],[1099,535],[1107.5,600],[1115.5,600],
  [1128.5,496.5],[1136.5,533.5],[1145,550],[1156,492.5],[1168.5,548.5],[1188,417],[1201,475],[1212.5,436.5],[1228.5,475.5],
  [1244.5,387.5],[1258.5,449.5],[1265,446],[1272.5,433.5],[1286.5,483.5],[1301,431],[1317.5,497.5],[1327.5,502.5],[1340.5,600],
  [1352,600],[1353,588]
];
document.getElementById('trace-red').setAttribute('d', smooth(idle));

const grid = document.getElementById('grid');
const levels = [
  ['13.80',125],['10.35',169],['6.90',213],['3.45',257],['0',301],['-3.45',345],
  ['2',366],['1.60',389],['1.20',413],['0.80',436],['0.40',460],['0',483],['-0.40',506],['-0.80',530],['-1.20',553],['-1.60',577],['-2',600]
];
for (const [label, y] of levels) {
  if (label !== '0') add(grid, 'path', { d: `M45 ${y + .5}H1353`, class: 'grid-line' });
  add(grid, 'path', { d: `M36 ${y + .5}h3`, class: 'tick' });
  add(grid, 'text', { x: 34, y: y + 3, class: 'axis' }, label);
}
const times = [['9.84050',227],['9.87050',416],['9.90050',605],['9.93050',795],['9.96050',984],['9.99050',1173],['10.020',1362]];
for (const [label, x] of times) {
  add(grid, 'path', { d: `M${x + .5} 124V605`, class: 'grid-line' });
  add(grid, 'path', { d: `M${x + .5} 605v4`, class: 'tick' });
  add(grid, 'text', { x: label === '10.020' ? x - 6 : x, y: 618, class: 'time-label' }, label);
}

const ruler = document.getElementById('ruler');
const x0 = 148.5, width = 940;
add(ruler, 'rect', { x: x0, y: 192.5, width, height: 25, fill: '#ccffcc', stroke: '#888' });
for (let i = 1; i < 80; i++) {
  const major = i % 5 === 0;
  const x = Math.round(x0 + width * i / 80) + .5;
  const len = major ? 5 : 4;
  add(ruler, 'path', { d: `M${x} 193v${len}M${x} ${217 - len + 2}v${len - 2}`, stroke: major ? '#000' : '#777' });
}
for (let i = 0; i <= 16; i++) {
  const x = i === 0 ? 157 : i === 16 ? 1074 : x0 + width * i / 16 + 2;
  add(ruler, 'text', { x, y: 210, class: 'ruler-label' }, `${i * 45}°`);
}

const peaks = [
  [141,367,64,'(50°) 1.63 В',214,388],[377,375,64,'(51°) 1.48 В',450,396],[609,359,64,'(49°) 1.76 В',682,380],[844,366,64,'(49°) 1.64 В',917,387],
  [230,579,72,'(-55°) -2.00 В',311,600],[468,579,72,'(-53°) -2.00 В',549,600],[700,579,72,'(-55°) -2.00 В',781,600],[936,579,72,'(-55°) -2.00 В',1017,600]
];
const callouts = document.getElementById('callouts');
for (const [x, y, w, label, cx, cy] of peaks) {
  add(callouts, 'rect', { x, y, width: w, height: 18, fill: '#fff' });
  add(callouts, 'text', { x: x + w / 2, y: y + 13, class: 'callout' }, label);
  add(callouts, 'circle', { cx, cy, r: 4, fill: '#fff' });
}
```
